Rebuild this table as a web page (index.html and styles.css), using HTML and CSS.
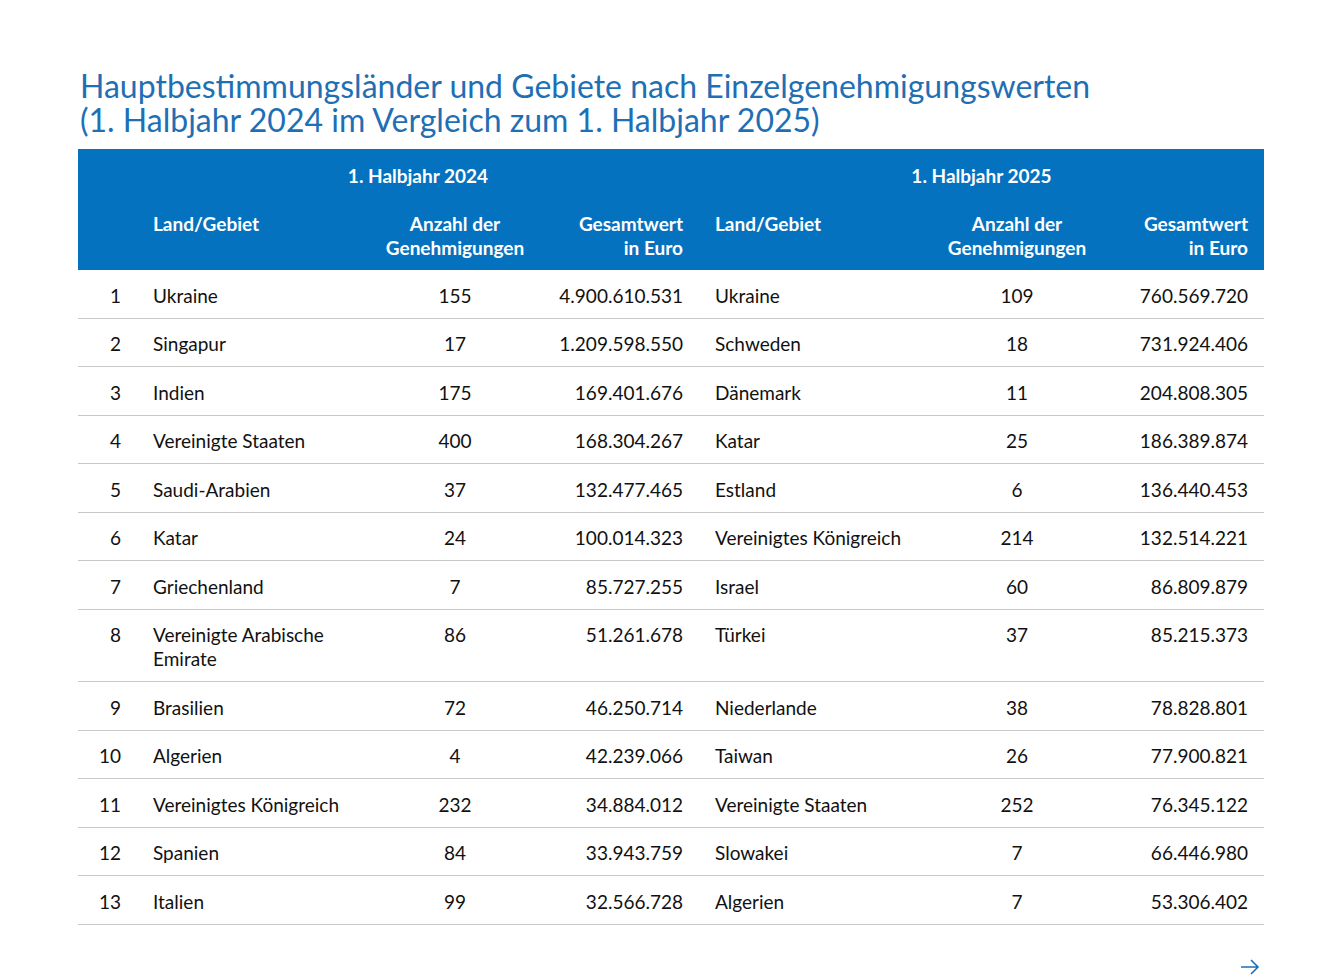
FILE: index.html
```html
<!DOCTYPE html>
<html lang="de">
<head>
<meta charset="utf-8">
<title>Hauptbestimmungsländer</title>
<link rel="stylesheet" href="styles.css">
</head>
<body>
<main class="page">
  <h1 class="title"><span class="tline">Hauptbestimmungsländer und Gebiete nach Einzelgenehmigungswerten</span><span class="tline">(1. Halbjahr 2024 im Vergleich zum 1. Halbjahr 2025)</span></h1>
  <table class="tbl">
    <colgroup>
      <col class="c-rank"><col class="c-land"><col class="c-count"><col class="c-val1">
      <col class="c-land"><col class="c-count"><col class="c-val2">
    </colgroup>
    <thead>
      <tr class="h-year">
        <th></th>
        <th colspan="3" class="center">1. Halbjahr 2024</th>
        <th colspan="3" class="center">1. Halbjahr 2025</th>
      </tr>
      <tr class="h-cols">
        <th></th>
        <th class="left">Land/Gebiet</th>
        <th class="center count">Anzahl der<br>Genehmigungen</th>
        <th class="right">Gesamtwert<br>in Euro</th>
        <th class="left">Land/Gebiet</th>
        <th class="center count">Anzahl der<br>Genehmigungen</th>
        <th class="right">Gesamtwert<br>in Euro</th>
      </tr>
    </thead>
    <tbody>
      <tr><td class="rank">1</td><td>Ukraine</td><td class="center">155</td><td class="right">4.900.610.531</td><td>Ukraine</td><td class="center">109</td><td class="right">760.569.720</td></tr>
      <tr><td class="rank">2</td><td>Singapur</td><td class="center">17</td><td class="right">1.209.598.550</td><td>Schweden</td><td class="center">18</td><td class="right">731.924.406</td></tr>
      <tr><td class="rank">3</td><td>Indien</td><td class="center">175</td><td class="right">169.401.676</td><td>Dänemark</td><td class="center">11</td><td class="right">204.808.305</td></tr>
      <tr><td class="rank">4</td><td>Vereinigte Staaten</td><td class="center">400</td><td class="right">168.304.267</td><td>Katar</td><td class="center">25</td><td class="right">186.389.874</td></tr>
      <tr><td class="rank">5</td><td>Saudi-Arabien</td><td class="center">37</td><td class="right">132.477.465</td><td>Estland</td><td class="center">6</td><td class="right">136.440.453</td></tr>
      <tr><td class="rank">6</td><td>Katar</td><td class="center">24</td><td class="right">100.014.323</td><td>Vereinigtes Königreich</td><td class="center">214</td><td class="right">132.514.221</td></tr>
      <tr><td class="rank">7</td><td>Griechenland</td><td class="center">7</td><td class="right">85.727.255</td><td>Israel</td><td class="center">60</td><td class="right">86.809.879</td></tr>
      <tr><td class="rank">8</td><td>Vereinigte Arabische<br>Emirate</td><td class="center">86</td><td class="right">51.261.678</td><td>Türkei</td><td class="center">37</td><td class="right">85.215.373</td></tr>
      <tr><td class="rank">9</td><td>Brasilien</td><td class="center">72</td><td class="right">46.250.714</td><td>Niederlande</td><td class="center">38</td><td class="right">78.828.801</td></tr>
      <tr><td class="rank">10</td><td>Algerien</td><td class="center">4</td><td class="right">42.239.066</td><td>Taiwan</td><td class="center">26</td><td class="right">77.900.821</td></tr>
      <tr><td class="rank">11</td><td>Vereinigtes Königreich</td><td class="center">232</td><td class="right">34.884.012</td><td>Vereinigte Staaten</td><td class="center">252</td><td class="right">76.345.122</td></tr>
      <tr><td class="rank">12</td><td>Spanien</td><td class="center">84</td><td class="right">33.943.759</td><td>Slowakei</td><td class="center">7</td><td class="right">66.446.980</td></tr>
      <tr><td class="rank">13</td><td>Italien</td><td class="center">99</td><td class="right">32.566.728</td><td>Algerien</td><td class="center">7</td><td class="right">53.306.402</td></tr>
    </tbody>
  </table>
  <div class="more">
    <svg class="arrow" width="20" height="16" viewBox="0 0 20 16" aria-hidden="true">
      <path d="M1 8 H18 M11 1 L18 8 L11 15" fill="none" stroke="#1f6fb5" stroke-width="1.6"/>
    </svg>
  </div>
</main>
</body>
</html>
```
FILE: styles.css
```css
html, body {
  margin: 0;
  padding: 0;
  background: #ffffff;
}
body {
  font-family: Lato, "Noto Sans", "Liberation Sans", sans-serif;
  color: #111111;
}
.page {
  width: 1186px;
  margin-left: 78px;
  padding-top: 69px;
}
.title {
  margin: 0 0 12px 2px;
  font-weight: 400;
  font-size: 32px;
  line-height: 34px;
  color: #1f6fb5;
}
.tline {
  display: block;
  height: 34px;
  overflow: visible;
}
.tbl {
  width: 1186px;
  border-collapse: collapse;
  table-layout: fixed;
  font-size: 19px;
  line-height: 24px;
}
.c-rank { width: 59px; }
.c-land { width: 248px; }
.c-count { width: 140px; }
.c-val1 { width: 174px; }
.c-val2 { width: 177px; }
thead {
  background: #0572bf;
  color: #ffffff;
}
thead th {
  font-weight: 700;
  padding: 0 16px;
}
thead th.count {
  padding: 0;
}
.h-year th {
  padding-top: 15px;
  padding-bottom: 12px;
  height: 24px;
}
.h-cols th {
  padding-top: 12px;
  padding-bottom: 10px;
  vertical-align: top;
}
thead .h-cols th.count {
  padding-top: 12px;
  padding-bottom: 10px;
}
tbody td {
  padding: 13.5px 16px 10px 16px;
  border-bottom: 1px solid #c9c9c9;
  vertical-align: top;
}
.left { text-align: left; }
.center { text-align: center; }
.right { text-align: right; }
td.rank { text-align: right; }
.more {
  display: flex;
  justify-content: flex-end;
  padding-top: 34px;
  padding-right: 4px;
}
.arrow { display: block; }
```
